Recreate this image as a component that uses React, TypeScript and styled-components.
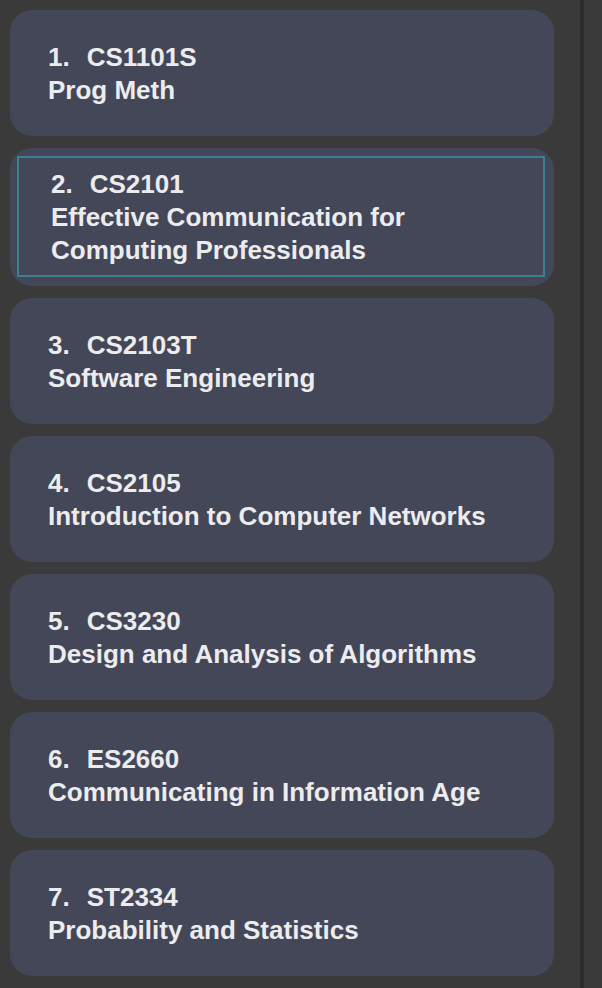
import React from "react";
import styled, { createGlobalStyle } from "styled-components";

const GlobalStyle = createGlobalStyle`
  html, body {
    margin: 0;
    padding: 0;
    background: #3a3a3a;
  }
  body {
    font-family: "Liberation Sans", Arial, sans-serif;
  }
`;

const Page = styled.div`
  display: flex;
  width: 602px;
  height: 988px;
  background: #3a3a3a;
  overflow: hidden;
`;

const ListPane = styled.div`
  width: 580px;
  box-sizing: border-box;
  padding: 10px 0 0 10px;
  display: flex;
  flex-direction: column;
  gap: 12px;
`;

const Divider = styled.div`
  width: 4px;
  background: #2c2c2c;
  flex-shrink: 0;
`;

const RightPane = styled.div`
  flex: 1;
  background: #3a3a3a;
`;

const Card = styled.div<{ $selected?: boolean }>`
  width: 544px;
  box-sizing: border-box;
  background: #434757;
  border-radius: 22px;
  padding: ${(p) => (p.$selected ? "8px 9px 9px 7px" : "31px 20px 29px 38px")};
`;

const FocusBox = styled.div`
  border: 2px solid #3c7f93;
  padding: 10px 12px 8px 32px;
`;

const Line = styled.div`
  color: #ececee;
  font-size: 26px;
  font-weight: 700;
  line-height: 33px;
  white-space: nowrap;
`;

const Head = styled(Line)`
  display: flex;
  gap: 17px;
`;

const Title = styled(Line)`
  white-space: normal;
`;

type Mod = { code: string; title: string };

const modules: Mod[] = [
  { code: "CS1101S", title: "Prog Meth" },
  { code: "CS2101", title: "Effective Communication for Computing Professionals" },
  { code: "CS2103T", title: "Software Engineering" },
  { code: "CS2105", title: "Introduction to Computer Networks" },
  { code: "CS3230", title: "Design and Analysis of Algorithms" },
  { code: "ES2660", title: "Communicating in Information Age" },
  { code: "ST2334", title: "Probability and Statistics" },
];

const CardContent = ({ index, mod }: { index: number; mod: Mod }) => (
  <>
    <Head>
      <span>{index}.</span>
      <span>{mod.code}</span>
    </Head>
    <Title>{mod.title}</Title>
  </>
);

export default function App() {
  return (
    <>
      <GlobalStyle />
      <Page>
        <ListPane>
          {modules.map((m, i) =>
            i === 1 ? (
              <Card key={m.code} $selected>
                <FocusBox>
                  <CardContent index={i + 1} mod={m} />
                </FocusBox>
              </Card>
            ) : (
              <Card key={m.code}>
                <CardContent index={i + 1} mod={m} />
              </Card>
            )
          )}
        </ListPane>
        <Divider />
        <RightPane />
      </Page>
    </>
  );
}
